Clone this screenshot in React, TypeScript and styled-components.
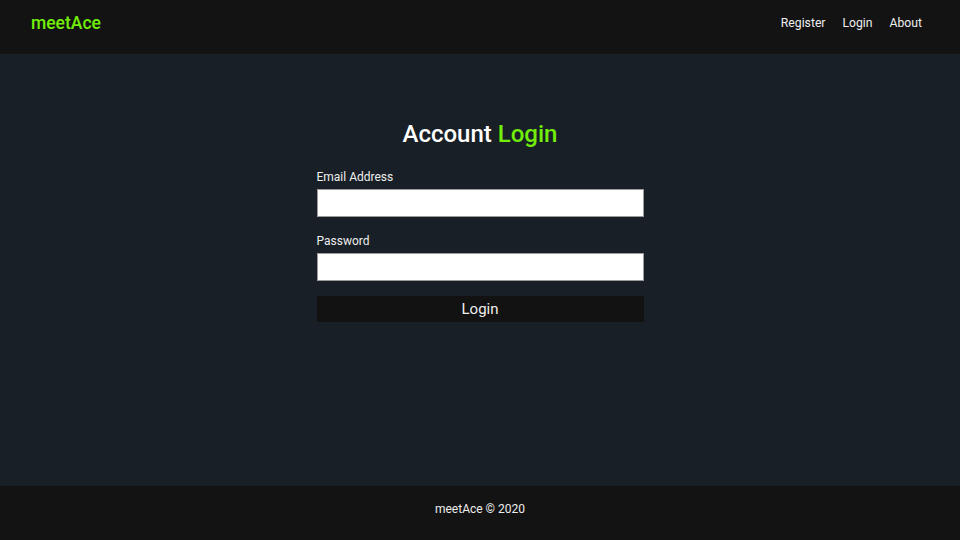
import React from "react";
import styled, { createGlobalStyle } from "styled-components";

const Global = createGlobalStyle`
  html, body { margin: 0; padding: 0; height: 100%; }
  body { font-family: Roboto, "Liberation Sans", sans-serif; background: #181f26; color: #eee; }
  #root { min-height: 100vh; }
  * { box-sizing: border-box; }
`;

const Page = styled.div`
  display: flex;
  flex-direction: column;
  min-height: 100vh;
`;

const Header = styled.header`
  height: 54px;
  background: #131313;
  display: flex;
  align-items: center;
  justify-content: space-between;
  padding: 0 38px 9px 31px;
`;

const Logo = styled.a`
  color: #72ee0a;
  font-size: 17.5px;
  font-weight: 500;
  line-height: 20px;
  text-decoration: none;
`;

const Nav = styled.nav`
  display: flex;
  gap: 17px;
`;

const NavLink = styled.a`
  color: #eee;
  font-size: 12.2px;
  line-height: 14px;
  text-decoration: none;
`;

const Main = styled.main`
  flex: 1;
  display: flex;
  justify-content: center;
`;

const Form = styled.form`
  width: 327px;
  padding-top: 66px;
  display: flex;
  flex-direction: column;
`;

const Title = styled.h1`
  margin: 0 0 22px;
  text-align: center;
  font-size: 24px;
  font-weight: 500;
  color: #fff;
  line-height: 28px;
`;

const Accent = styled.span`
  color: #72ee0a;
`;

const Label = styled.label`
  font-size: 12px;
  line-height: 14px;
  color: #eee;
  margin-bottom: 5px;
`;

const Input = styled.input`
  height: 28px;
  width: 100%;
  border: 1px solid #9a9a9a;
  background: #fff;
  margin: 0 0 17px;
  outline: none;
`;

const Button = styled.button`
  height: 26px;
  margin-top: -2px;
  width: 100%;
  background: #121212;
  border: none;
  color: #eee;
  font-family: Roboto, "Liberation Sans", sans-serif;
  font-size: 15px;
  padding: 0;
`;

const Footer = styled.footer`
  height: 54px;
  background: #131313;
  display: flex;
  align-items: center;
  justify-content: center;
  padding-bottom: 9px;
  font-size: 12px;
  line-height: 14px;
  color: #eee;
`;

export default function App() {
  return (
    <>
      <Global />
      <Page>
        <Header>
          <Logo href="#">meetAce</Logo>
          <Nav>
            <NavLink href="#">Register</NavLink>
            <NavLink href="#">Login</NavLink>
            <NavLink href="#">About</NavLink>
          </Nav>
        </Header>
        <Main>
          <Form onSubmit={(e) => e.preventDefault()}>
            <Title>
              Account <Accent>Login</Accent>
            </Title>
            <Label>Email Address</Label>
            <Input type="email" />
            <Label>Password</Label>
            <Input type="password" />
            <Button type="submit">Login</Button>
          </Form>
        </Main>
        <Footer>meetAce © 2020</Footer>
      </Page>
    </>
  );
}
